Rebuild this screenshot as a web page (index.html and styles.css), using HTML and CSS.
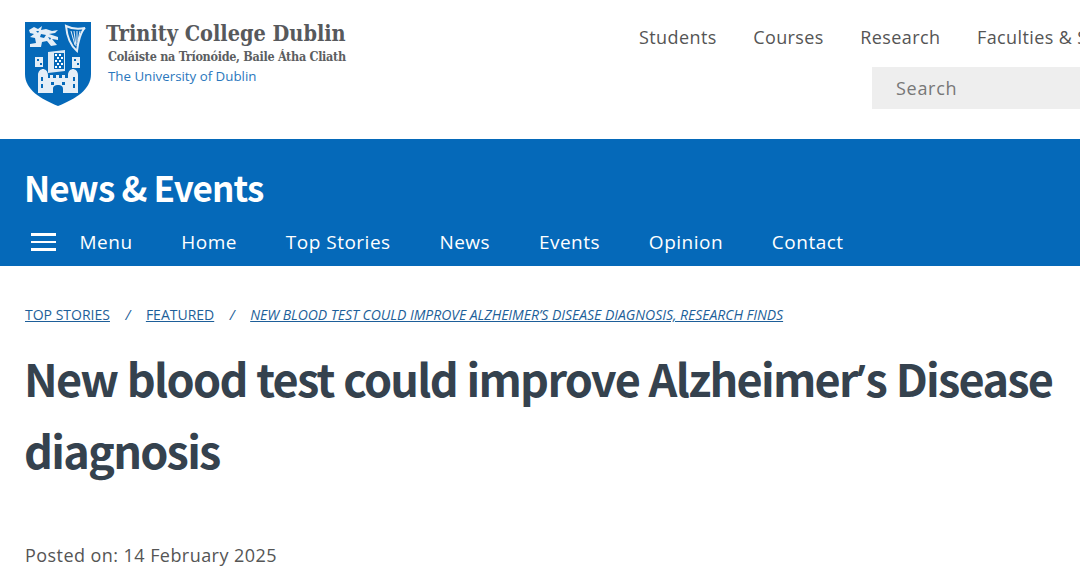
FILE: index.html
```html
<!DOCTYPE html>
<html lang="en">
<head>
<meta charset="utf-8">
<title>New blood test could improve Alzheimer's Disease diagnosis</title>
<link rel="stylesheet" href="styles.css">
</head>
<body>
<header class="top">
  <a class="brand" href="#">
    <svg class="crest" viewBox="0 0 66 84" width="66" height="84" aria-hidden="true">
      <path d="M0 0H66V52C66 68 50 77 33 84C16 77 0 68 0 52Z" fill="#0569b9"/>
      <path d="M4 8L9 5L13 7L17 4L16 8L21 7L27 9L33 8L30 11L24 12L33 15L33 18L27 17L32 23L26 24L22 19L17 20L16 25L5 25L5 22L11 21L10 16L5 15L9 12L5 11Z" fill="#e4eef7"/>
      <path d="M11 9l3 0-1 2zM16 12l5 1-2 3-4-1zM23 15l3 1-1 2z" fill="#0569b9"/>
      <g fill="none" stroke="#e4eef7">
        <path d="M41 4C42 15 46 24 52 29C53 20 56 9 60 6C55 7 47 7 41 4Z" stroke-width="2"/>
        <path d="M46 9L50 23M49 9L51 24M52 9L52 22M55 9L53 19" stroke-width="1"/>
      </g>
      <path d="M23 30L40 28V49L23 51Z" fill="#dce9f4"/>
      <path d="M29 31H39V47H29Z" fill="#0569b9"/>
      <path d="M30 32h2v2h-2zM34 32h2v2h-2zM32 35h2v2h-2zM36 35h2v2h-2zM30 38h2v2h-2zM34 38h2v2h-2zM32 41h2v2h-2zM36 41h2v2h-2zM30 44h2v2h-2zM34 44h2v2h-2z" fill="#fff"/>
      <path d="M10 35H18V45H10ZM47 35H55V46H47Z" fill="#e4eef7"/>
      <path d="M12 37h2v2h-2zM15 41h2v2h-2zM49 37h2v2h-2zM52 41h2v2h-2z" fill="#0569b9"/>
      <path d="M13 71V53C13 49 16 47 18 47C20 47 23 49 23 53V56H25V53H28V56H31V53H34V56H37V53H40V56H43V53C43 49 46 47 48 47C50 47 53 49 53 53V71Z" fill="#e4eef7"/>
      <path d="M16 55h2v4h-2zM48 55h2v4h-2zM16 62h2v4h-2zM48 62h2v4h-2zM26 60h3v3h-3zM37 60h3v3h-3zM28 71V67C28 64 30 63 33 63S38 64 38 67V71Z" fill="#0569b9"/>
    </svg>
    <span class="brand-text">
      <span class="brand-name">Trinity College Dublin</span>
      <span class="brand-irish">Coláiste na Tríonóide, Baile Átha Cliath</span>
      <span class="brand-uni">The University of Dublin</span>
    </span>
  </a>
  <div class="utility">
    <nav class="utility-nav">
      <a href="#">Students</a>
      <a href="#">Courses</a>
      <a href="#">Research</a>
      <a href="#">Faculties &amp; Schools</a>
    </nav>
    <div class="search">Search</div>
  </div>
</header>
<section class="band">
  <h2 class="band-title">News &amp; Events</h2>
  <nav class="band-nav">
    <a class="menu" href="#"><span class="burger"><i></i><i></i><i></i></span>Menu</a>
    <a href="#">Home</a>
    <a href="#">Top Stories</a>
    <a href="#">News</a>
    <a href="#">Events</a>
    <a href="#">Opinion</a>
    <a href="#">Contact</a>
  </nav>
</section>
<main class="content">
  <nav class="crumbs">
    <a href="#">Top Stories</a>
    <span class="sep">/</span>
    <a href="#">Featured</a>
    <span class="sep">/</span>
    <a class="current" href="#">New blood test could improve Alzheimer’s Disease diagnosis, research finds</a>
  </nav>
  <h1 class="headline">New blood test could improve Alzheimer<span class="apos">’</span>s Disease diagnosis</h1>
  <p class="posted">Posted on: 14 February 2025</p>
</main>
</body>
</html>
```
FILE: styles.css
```css
html, body {
  margin: 0;
  padding: 0;
  height: 584px;
  overflow: hidden;
  background: #fff;
  font-family: "Open Sans", "Noto Sans", sans-serif;
}
a { text-decoration: none; color: inherit; }

.top {
  height: 139px;
  box-sizing: border-box;
  padding: 22px 0 0 25px;
  display: flex;
  justify-content: space-between;
}
.brand { display: flex; gap: 15px; align-self: flex-start; }
.crest { display: block; flex: none; }
.brand-text { display: flex; flex-direction: column; }
.brand-name {
  font-family: "DejaVu Serif", serif;
  font-stretch: condensed;
  font-weight: 700;
  font-size: 21.5px;
  line-height: 24px;
  color: #57595c;
}
.brand-irish {
  font-family: "DejaVu Serif", serif;
  font-stretch: condensed;
  font-weight: 700;
  font-size: 12.5px;
  letter-spacing: -0.3px;
  line-height: 18px;
  margin: 2px 0 0 2px;
  color: #5c5e61;
}
.brand-uni {
  font-size: 13.3px;
  line-height: 19px;
  margin: 1px 0 0 2px;
  color: #2a77bd;
}

.utility {
  width: 441px;
  flex: none;
  overflow: hidden;
  display: flex;
  flex-direction: column;
  align-items: flex-start;
}
.utility-nav {
  display: flex;
  gap: 36.5px;
  white-space: nowrap;
  font-size: 18px;
  letter-spacing: 0.4px;
  line-height: 30px;
  color: #555;
}
.search {
  margin: 15px 0 0 233px;
  width: 208px;
  height: 42px;
  box-sizing: border-box;
  padding-left: 24px;
  background: #eeeeee;
  color: #777;
  font-size: 18px;
  letter-spacing: 0.7px;
  line-height: 42px;
}

.band {
  height: 127px;
  box-sizing: border-box;
  padding: 25px 0 0 24px;
  background: #0569b9;
  color: #fff;
}
.band-title {
  margin: 0;
  font-family: "Noto Sans CJK SC", "Open Sans", sans-serif;
  font-size: 35px;
  line-height: 46px;
  font-weight: 600;
  letter-spacing: -0.9px;
}
.band-nav {
  margin: 16px 0 0 1px;
  display: flex;
  gap: 48.75px;
  font-size: 19px;
  letter-spacing: 0.5px;
  line-height: 32px;
  white-space: nowrap;
}
.menu { display: flex; align-items: center; gap: 23.5px; margin-left: 6px; }
.burger { display: flex; flex-direction: column; gap: 5px; width: 25px; }
.burger i { display: block; height: 2.500px; background: #fff; }

.content { padding: 0 20px 0 25px; }
.crumbs {
  margin-top: 39px;
  display: flex;
  font-size: 14px;
  line-height: 19px;
  color: #1e5f99;
  white-space: nowrap;
}
.crumbs a { text-decoration: underline; text-transform: uppercase; }
.crumbs .current { font-style: italic; letter-spacing: -0.03px; }
.sep { margin: 0 15.5px; font-style: italic; }
.headline {
  margin: 18px 0 0 -1px;
  font-family: "Noto Sans CJK SC", "Open Sans", sans-serif;
  font-size: 45px;
  line-height: 72px;
  font-weight: 600;
  letter-spacing: -1.72px;
  word-spacing: 1px;
  color: #35424e;
}
.apos { font-family: "Open Sans", sans-serif; line-height: 0; letter-spacing: 0; }
.posted {
  margin: 55px 0 0;
  font-size: 18px;
  letter-spacing: 0.44px;
  line-height: 28px;
  color: #555;
}
```
